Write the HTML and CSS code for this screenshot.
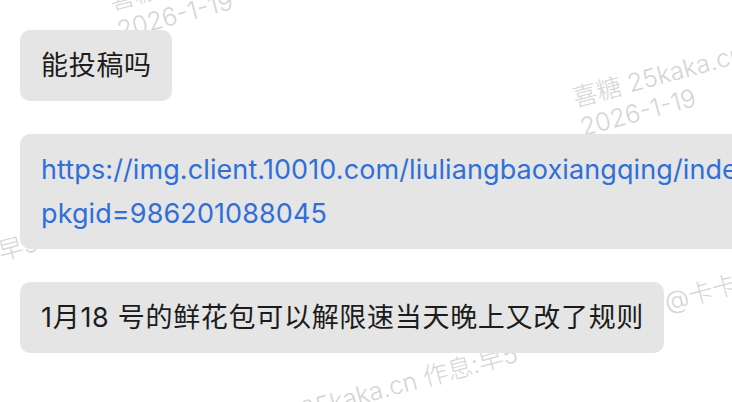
FILE: index.html
```html
<!DOCTYPE html>
<html lang="zh-CN">
<head>
    <meta charset="UTF-8">
    <title>聊天记录</title>
    <link rel="stylesheet" href="styles.css">
</head>
<body>
    <div class="chat">
        <!-- 水印层，在气泡下面 -->
        <div class="watermark">
            <div class="mark mark-a">喜糖 25kaka.cn 作息:早5<br>2026-1-19</div>
            <div class="mark mark-b">喜糖 25kaka.cn 作息:早5<br>2026-1-19</div>
            <div class="mark mark-c">喜糖 25kaka.cn 作息:早5<br>2026-1-19</div>
            <div class="mark mark-d">喜糖 25kaka.cn 作息:早5<br>2026-1-19</div>
            <div class="mark mark-e">@卡卡</div>
        </div>
        <div class="bubble">能投稿吗</div>
        <div class="bubble">
            <a class="link" href="javascript:;">https://img.client.10010.com/liuliangbaoxiangqing/index.html?<br>pkgid=986201088045</a>
        </div>
        <div class="bubble">1月18 号的鲜花包可以解限速当天晚上又改了规则</div>
    </div>
</body>
</html>
```

FILE: styles.css
```css
html, body {
    margin: 0;
    padding: 0;
    background: #fff;
    overflow: hidden;
}
body {
    font-family: Inter, "Noto Sans CJK SC", sans-serif;
}
.chat {
    position: relative;
    display: flex;
    flex-direction: column;
    align-items: flex-start;
    gap: 33px;
    padding: 30px 0 0 20px;
    height: 402px;
    box-sizing: border-box;
}
.bubble {
    position: relative;
    z-index: 1;
    padding: 14px 20px 13px 21px;
    background: #e5e5e5;
    border-radius: 10px;
    font-size: 27px;
    line-height: 44px;
    letter-spacing: 0.7px;
    color: #1c1c1c;
    white-space: nowrap;
}
.link {
    color: #2f6fd7;
    text-decoration: none;
    letter-spacing: 0.1px;
}
/* 水印 */
.watermark {
    position: absolute;
    left: 0;
    top: 0;
    right: 0;
    bottom: 0;
    z-index: 0;
    pointer-events: none;
}
.mark {
    position: absolute;
    font-size: 25px;
    line-height: 30px;
    font-weight: 300;
    color: #d5d5d5;
    white-space: nowrap;
    transform: rotate(-15deg);
    transform-origin: 0 0;
}
.mark-a {
    left: 106px;
    top: -13px;
}
.mark-b {
    left: 569px;
    top: 84px;
}
.mark-c {
    left: 242px;
    top: 411px;
}
.mark-d {
    left: -238px;
    top: 300px;
}
.mark-e {
    left: 661px;
    top: 288px;
}
```
